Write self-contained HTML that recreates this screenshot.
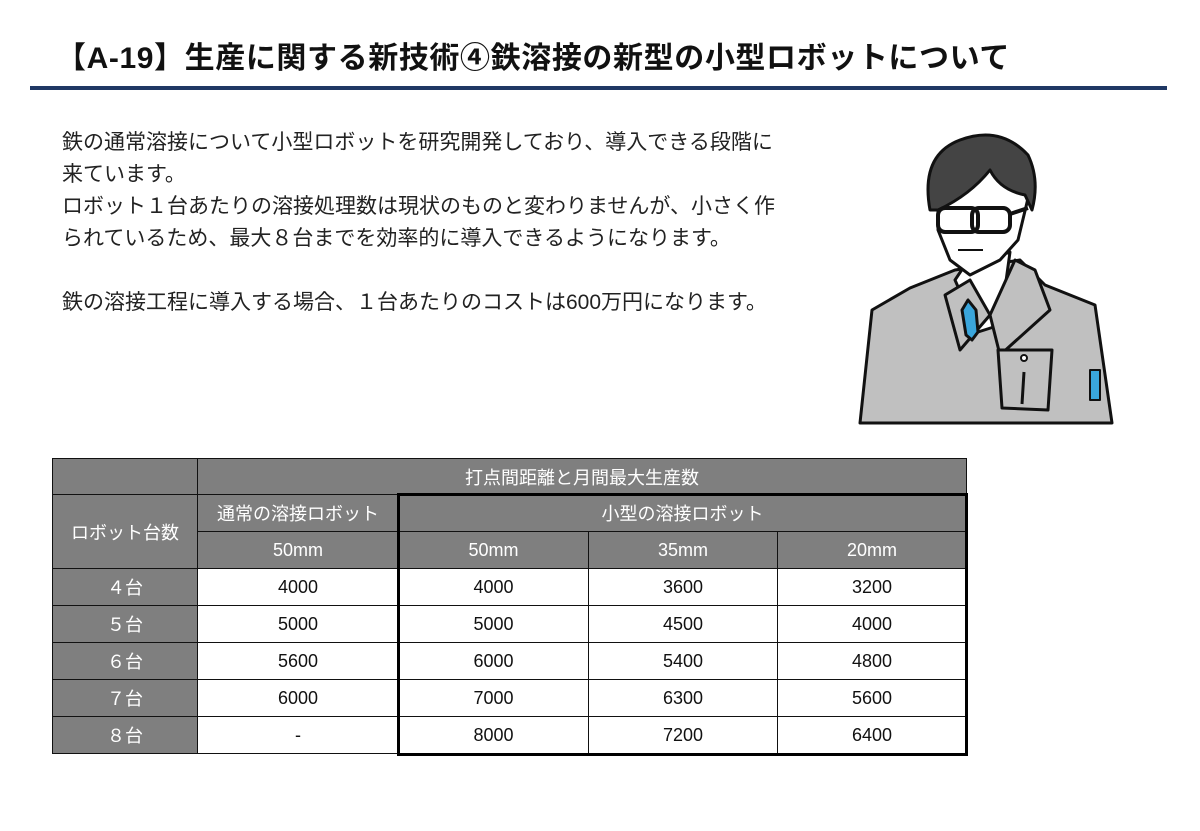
<!DOCTYPE html>
<html><head><meta charset="utf-8"><style>
body{margin:0;width:1200px;height:831px;background:#fff;position:relative;overflow:hidden;font-family:"Liberation Sans","Noto Sans CJK JP",sans-serif;color:#111}
.t{position:absolute;left:56px;top:33px;font-size:30px;font-weight:bold;letter-spacing:0.6px;white-space:nowrap}
.line{position:absolute;left:30px;top:86px;width:1137px;height:4px;background:#1f3864}
.p{position:absolute;left:62px;font-size:21px;white-space:nowrap;color:#222}
.c{position:absolute;box-sizing:border-box;border:1px solid #111;display:flex;align-items:center;justify-content:center;font-size:18px}
.g{background:#7f7f7f;color:#fff}
.w{background:#fff;color:#111}
</style></head><body>
<div class="t">【A-19】生産に関する新技術④鉄溶接の新型の小型ロボットについて</div>
<div class="line"></div>
<div class="p" style="top:126px">鉄の通常溶接について小型ロボットを研究開発しており、導入できる段階に</div>
<div class="p" style="top:158px">来ています。</div>
<div class="p" style="top:190px">ロボット１台あたりの溶接処理数は現状のものと変わりませんが、小さく作</div>
<div class="p" style="top:222px">られているため、最大８台までを効率的に導入できるようになります。</div>
<div class="p" style="top:286px">鉄の溶接工程に導入する場合、１台あたりのコストは600万円になります。</div>

<svg style="position:absolute;left:850px;top:110px" width="280" height="320" viewBox="0 0 280 320">
<g stroke="#111" stroke-width="3" stroke-linejoin="round">
<path d="M10 313 L22 200 L60 178 L105 160 L170 150 L195 175 L245 195 L262 313 Z" fill="#c0c0c0"/>
<path d="M105 170 L115 155 L160 142 L150 215 L128 222 Z" fill="#fff"/>
<path d="M95 185 L110 240 L140 205 L120 170 Z" fill="#c0c0c0"/>
<path d="M165 150 L185 160 L200 200 L150 245 L140 205 Z" fill="#c0c0c0"/>
<path d="M118 190 L112 200 L116 225 L122 230 L128 222 L126 200 Z" fill="#3aa6dc"/>
<path d="M148 240 L202 240 L198 300 L152 298 Z" fill="#c0c0c0"/>
<path d="M174 262 L172 294" fill="none"/>
<circle cx="174" cy="248" r="3" fill="#fff" stroke-width="2"/>
<path d="M88 70 Q95 30 135 30 Q175 32 180 80 L168 130 L150 150 L120 165 L100 150 L88 120 Z" fill="#fff"/>
<path d="M80 100 Q70 45 110 30 Q150 15 178 45 Q190 70 182 100 L175 85 Q150 80 140 60 Q120 85 88 100 Z" fill="#444"/>
<rect x="88" y="98" width="40" height="24" rx="7" fill="none" stroke-width="4"/>
<rect x="122" y="98" width="38" height="24" rx="7" fill="none" stroke-width="4"/>
<path d="M160 104 L178 98" fill="none" stroke-width="4"/>
<path d="M108 140 L133 140" fill="none" stroke-width="2"/>
<path d="M240 260 L250 260 L250 290 L240 290Z" fill="#3aa6dc" stroke-width="2"/>
</g>
</svg>

<div class="c g" style="left:52px;top:458px;width:146px;height:37px"></div>
<div class="c g" style="left:197px;top:458px;width:770px;height:37px">打点間距離と月間最大生産数</div>
<div class="c g" style="left:52px;top:494px;width:146px;height:75px">ロボット台数</div>
<div class="c g" style="left:197px;top:494px;width:202px;height:38px">通常の溶接ロボット</div>
<div class="c g" style="left:197px;top:531px;width:202px;height:38px">50mm</div>
<div class="c g" style="left:398px;top:494px;width:569px;height:38px">小型の溶接ロボット</div>
<div class="c g" style="left:398px;top:531px;width:191px;height:38px">50mm</div>
<div class="c g" style="left:588px;top:531px;width:190px;height:38px">35mm</div>
<div class="c g" style="left:777px;top:531px;width:190px;height:38px">20mm</div>

<div class="c g" style="left:52px;top:568px;width:146px;height:38px">４台</div>
<div class="c w" style="left:197px;top:568px;width:202px;height:38px">4000</div>
<div class="c w" style="left:398px;top:568px;width:191px;height:38px">4000</div>
<div class="c w" style="left:588px;top:568px;width:190px;height:38px">3600</div>
<div class="c w" style="left:777px;top:568px;width:190px;height:38px">3200</div>

<div class="c g" style="left:52px;top:605px;width:146px;height:38px">５台</div>
<div class="c w" style="left:197px;top:605px;width:202px;height:38px">5000</div>
<div class="c w" style="left:398px;top:605px;width:191px;height:38px">5000</div>
<div class="c w" style="left:588px;top:605px;width:190px;height:38px">4500</div>
<div class="c w" style="left:777px;top:605px;width:190px;height:38px">4000</div>

<div class="c g" style="left:52px;top:642px;width:146px;height:38px">６台</div>
<div class="c w" style="left:197px;top:642px;width:202px;height:38px">5600</div>
<div class="c w" style="left:398px;top:642px;width:191px;height:38px">6000</div>
<div class="c w" style="left:588px;top:642px;width:190px;height:38px">5400</div>
<div class="c w" style="left:777px;top:642px;width:190px;height:38px">4800</div>

<div class="c g" style="left:52px;top:679px;width:146px;height:38px">７台</div>
<div class="c w" style="left:197px;top:679px;width:202px;height:38px">6000</div>
<div class="c w" style="left:398px;top:679px;width:191px;height:38px">7000</div>
<div class="c w" style="left:588px;top:679px;width:190px;height:38px">6300</div>
<div class="c w" style="left:777px;top:679px;width:190px;height:38px">5600</div>

<div class="c g" style="left:52px;top:716px;width:146px;height:38px">８台</div>
<div class="c w" style="left:197px;top:716px;width:202px;height:38px">-</div>
<div class="c w" style="left:398px;top:716px;width:191px;height:38px">8000</div>
<div class="c w" style="left:588px;top:716px;width:190px;height:38px">7200</div>
<div class="c w" style="left:777px;top:716px;width:190px;height:38px">6400</div>

<div style="position:absolute;left:397px;top:493px;width:571px;height:263px;box-sizing:border-box;border:3px solid #000"></div>
</body></html>
